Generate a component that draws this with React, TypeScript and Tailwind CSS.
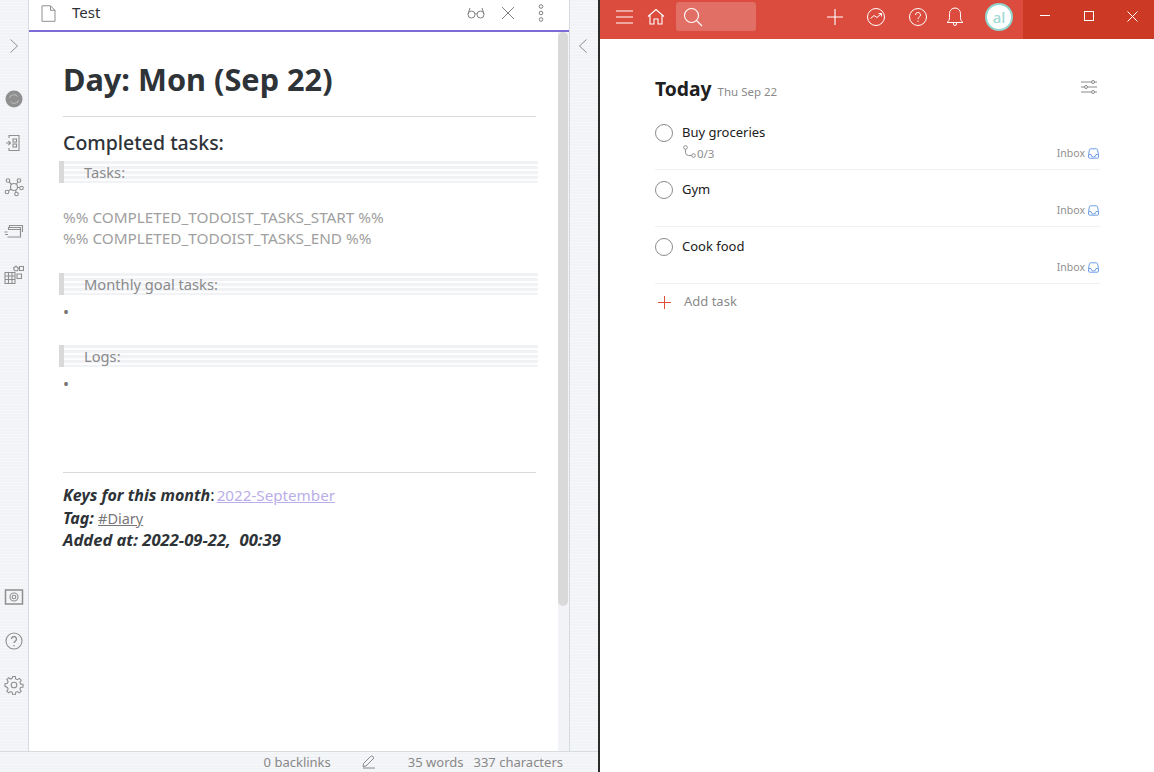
import React from "react";

const SideIcon = ({ children }: { children: React.ReactNode }) => (
  <svg width="20" height="20" viewBox="0 0 20 20" fill="none" stroke="#8f8f8f" strokeWidth="1.1">{children}</svg>
);

const Band = ({ label }: { label: string }) => (
  <div className="h-[22px] w-[479px] -ml-1 border-l-[5px] border-[#d9d9d9] pl-5 text-[14.700px] leading-[22px] text-[#8a8a8a] bg-[repeating-linear-gradient(180deg,#f0f2f6_0px,#f0f2f6_3px,#fdfdfe_3px,#fdfdfe_5px)]">
    {label}
  </div>
);

const InboxIcon = () => (
  <svg width="11" height="11" viewBox="0 0 11 11" fill="none" stroke="#6f9fe8" strokeWidth="1">
    <path d="M2.500 .800h6a1 1 0 0 1 1 .8l1 5v2.400a1.200 1.200 0 0 1-1.200 1.200H1.700A1.200 1.200 0 0 1 .5 9V6.600l1-5a1 1 0 0 1 1-.8z" />
    <path d="M.7 6.500h2.300a2.500 2.500 0 0 0 5 0h2.300" />
  </svg>
);

const Task = ({ title, sub }: { title: string; sub?: boolean }) => (
  <div className="h-[57px] border-b border-[#f0f0f0] flex flex-col pt-[8px]">
    <div className="flex items-center h-[24px]">
      <div className="w-[18px] h-[18px] rounded-full border border-[#8c8c8c] mr-[9px]" />
      <span className="text-[13px] text-[#202020]">{title}</span>
    </div>
    <div className="flex items-center justify-between h-[17px] pl-[27px] pr-[1px] text-[10.500px] text-[#8f8f8f]">
      <span className="flex items-center">
        {sub && (
          <>
            <svg width="15" height="15" viewBox="0 0 15 15" fill="none" stroke="#8f8f8f" strokeWidth="1" className="-mt-0.5">
              <circle cx="3.500" cy="2.500" r="1.800" />
              <circle cx="11.500" cy="10.500" r="1.800" />
              <path d="M3.500 4.300v3a3.200 3.200 0 0 0 3.200 3.200h3" />
            </svg>
            <span className="text-[11.500px]">0/3</span>
          </>
        )}
      </span>
      <span className="flex items-center gap-[3px]">
        Inbox <InboxIcon />
      </span>
    </div>
  </div>
);

export default function App() {
  return (
    <div className="w-[1154px] h-[772px] overflow-hidden flex bg-[#f2f3f6] bg-[repeating-linear-gradient(180deg,#f1f3f6_0px,#f1f3f6_2px,#f6f7f9_2px,#f6f7f9_3px)] font-['Noto_Sans','Open_Sans',sans-serif]">
      {/* Obsidian window */}
      <div className="w-[598px] h-full flex flex-col">
        <div className="flex flex-1 min-h-0">
          {/* left ribbon */}
          <div className="w-[29px] border-r border-[#d5dbe0] flex flex-col items-center pt-[38px] pb-[56px] shrink-0">
            <svg width="10" height="16" viewBox="0 0 10 16" fill="none" stroke="#8f8f8f" strokeWidth="1" className="mb-[35px]">
              <path d="M1.500 1.500 8.500 8l-7 6.500" />
            </svg>
            <div className="flex flex-col gap-[24px] flex-1 items-center">
              <SideIcon>
                <circle cx="10" cy="10" r="8.500" fill="#8f8f8f" stroke="none" />
                <path d="M5.500 9a4.500 4.500 0 0 1 8-1.500M14.500 11a4.500 4.500 0 0 1-8 1.500" stroke="#b5b5b5" />
              </SideIcon>
              <SideIcon>
                <path d="M5 5V2.500h10v15H5V15" />
                <path d="M2 10h4M4.500 8 6.500 10l-2 2" />
                <rect x="9" y="6" width="3.500" height="3" />
                <rect x="9" y="11" width="3.500" height="3" />
              </SideIcon>
              <SideIcon>
                <circle cx="10" cy="10" r="3.500" />
                <circle cx="4" cy="3.500" r="1.800" />
                <circle cx="15" cy="3.500" r="1.800" />
                <circle cx="3" cy="15" r="1.800" />
                <circle cx="17.500" cy="11" r="1.800" />
                <circle cx="12.500" cy="17" r="1.800" />
                <path d="m5.200 5 2.400 2.500M14 5l-2 2.500M4.500 14 7 12M13.500 10.500h2.300M11.500 13.500l.7 1.800" />
              </SideIcon>
              <SideIcon>
                <path d="M5.500 7V4.500h13V11" />
                <path d="M4.500 9V6.500h12V14" />
                <path d="M4 8.500h12.500V16H3.500M.5 11h3M1 13.500h3" />
              </SideIcon>
              <SideIcon>
                <path d="M1 7.500h10V18.500H1zM1 11h10M1 14.500h10M4.500 7.500v11M8 7.500v11" />
                <path d="m9.500 3 2.500-1.800 2.500 2-1 2.500h-3zM15.500 1.500h4v4h-4zM13 9h4.500v4.500H13z" />
              </SideIcon>
            </div>
            <div className="flex flex-col gap-[24px] items-center">
              <SideIcon>
                <rect x="1.500" y="3" width="17" height="14" strokeWidth="1.500" />
                <circle cx="10" cy="10" r="4" />
                <circle cx="10" cy="10" r="1.800" />
              </SideIcon>
              <SideIcon>
                <circle cx="10" cy="10" r="8" />
                <path d="M7.500 8a2.500 2.500 0 1 1 3.800 2.100c-.9.6-1.300 1-1.300 2" strokeWidth="1.400" />
                <path d="M10 14v1.300" strokeWidth="1.400" />
              </SideIcon>
              <SideIcon>
                <circle cx="10" cy="10" r="2.800" />
                <path d="M8.700 1.500h2.600l.4 2.400 1.700.8 2-1.300 1.800 1.800-1.300 2 .7 1.700 2.400.5v2.600l-2.400.4-.7 1.700 1.300 2-1.800 1.800-2-1.300-1.700.7-.4 2.400H8.700l-.4-2.400-1.700-.7-2 1.300-1.800-1.800 1.300-2-.7-1.700L1 11.300V8.700l2.400-.5.700-1.700-1.300-2 1.800-1.800 2 1.300 1.700-.8z" />
              </SideIcon>
            </div>
          </div>

          {/* note pane */}
          <div className="w-[540px] flex flex-col bg-white shrink-0">
            <div className="h-[32px] border-b-2 border-[#7a6bd6] flex items-center pl-[12px] pr-[25px] shrink-0">
              <svg width="15" height="17" viewBox="0 0 15 17" fill="none" stroke="#8f8f8f" strokeWidth="1" className="-mt-1">
                <path d="M1 .800h8.500L14 5.300v11H1zM9.500.800v4.500H14" />
              </svg>
              <span className="ml-[16px] text-[15px] text-[#2e3338] leading-none -mt-[6px]">Test</span>
              <div className="ml-auto flex items-center gap-[16px] -mt-[4px]">
                <svg width="18" height="12" viewBox="0 0 18 12" fill="none" stroke="#7f7f7f" strokeWidth="1">
                  <circle cx="4.500" cy="7.500" r="3.500" />
                  <circle cx="13.500" cy="7.500" r="3.500" />
                  <path d="M8 7c.6-.5 1.400-.5 2 0M1 7l2-6M17 7l-2-6" />
                </svg>
                <svg width="14" height="14" viewBox="0 0 14 14" fill="none" stroke="#7f7f7f" strokeWidth="1">
                  <path d="m1 1 12 12M13 1 1 13" />
                </svg>
                <svg width="6" height="18" viewBox="0 0 6 18" fill="none" stroke="#7f7f7f" strokeWidth="1" className="ml-[7px]">
                  <circle cx="3" cy="2.500" r="1.800" />
                  <circle cx="3" cy="9" r="1.800" />
                  <circle cx="3" cy="15.500" r="1.800" />
                </svg>
              </div>
            </div>
            <div className="flex flex-1 min-h-0">
              <div className="w-[529px] pl-[34px] pr-[22px] flex flex-col">
                <div className="text-[30.700px] leading-[44px] font-bold text-[#2e3338] mt-[25px]">Day: Mon (Sep 22)</div>
                <div className="h-px bg-[#d9d9d9] mt-[15px]" />
                <div className="text-[19.500px] leading-[28px] font-medium text-[#2e3338] mt-[12px]">Completed tasks:</div>
                <div className="mt-[4px]"><Band label="Tasks:" /></div>
                <div className="mt-[24px] text-[15.300px] leading-[21px] text-[#a0a0a0] whitespace-nowrap">
                  <div>%% COMPLETED_TODOIST_TASKS_START %%</div>
                  <div>%% COMPLETED_TODOIST_TASKS_END %%</div>
                </div>
                <div className="mt-[24px]"><Band label="Monthly goal tasks:" /></div>
                <div className="h-[22px] leading-[34px] text-[#777] text-[16px]">•</div>
                <div className="mt-[28px]"><Band label="Logs:" /></div>
                <div className="h-[22px] leading-[34px] text-[#777] text-[16px]">•</div>
                <div className="h-px bg-[#d9d9d9] mt-[83px]" />
                <div className="mt-[11px] text-[16px] leading-[22.600px] text-[#2e3338]">
                  <div><b className="italic">Keys for this month</b>: <span className="text-[#b9aee8] underline text-[15.200px] -ml-[2px]">2022-September</span></div>
                  <div><b className="italic">Tag:</b> <span className="text-[#777] underline text-[14.500px]">#Diary</span></div>
                  <div className="font-bold italic whitespace-pre text-[16.600px]">Added at: 2022-09-22,  00:39</div>
                </div>
              </div>
              <div className="w-[11px] bg-[#f2f3f6] shrink-0">
                <div className="w-[10px] h-[574px] bg-[#d9d9d9] rounded-[5px]" />
              </div>
            </div>
          </div>

          {/* right ribbon */}
          <div className="flex-1 border-l border-[#d5dbe0] flex justify-center pt-[38px]">
            <svg width="10" height="16" viewBox="0 0 10 16" fill="none" stroke="#8f8f8f" strokeWidth="1" className="-ml-[2px]">
              <path d="M8.500 1.500 1.500 8l7 6.500" />
            </svg>
          </div>
        </div>
        {/* status bar */}
        <div className="h-[21px] border-t border-[#d9dcdf] flex items-center justify-end pr-[35px] text-[13px] text-[#888] shrink-0 leading-none">
          <span>0 backlinks</span>
          <svg width="14" height="14" viewBox="0 0 14 14" fill="none" stroke="#888" strokeWidth="1" className="ml-[31px] mr-[32px]">
            <path d="M1 11.500 1.500 8.500 8.500 1.500a1.500 1.500 0 0 1 2.500 2.500L4 11zM1 13h12" />
          </svg>
          <span>35 words</span>
          <span className="ml-[10px]">337 characters</span>
        </div>
      </div>

      {/* divider */}
      <div className="w-[2px] h-full bg-[#2b2b2b] shrink-0" />

      {/* Todoist */}
      <div className="w-[554px] h-full bg-white flex flex-col shrink-0">
        <div className="h-[39px] flex bg-[#db4c3f] text-white shrink-0">
          <div className="flex-1 flex items-center pl-[16px] pb-[6px]">
            <svg width="17" height="14" viewBox="0 0 17 14" fill="none" stroke="#fff" strokeWidth="1">
              <path d="M0 1h17M0 7h17M0 13h17" />
            </svg>
            <svg width="18" height="18" viewBox="0 0 18 18" fill="none" stroke="#fff" strokeWidth="1.100" className="ml-[14px]">
              <path d="M1 8.500 9 1.500l8 7M3 7v9h4v-5h4v5h4V7" />
            </svg>
            <div className="w-[80px] h-[29px] rounded-[3px] bg-white/20 ml-[11px] flex items-center pl-[7px]">
              <svg width="20" height="20" viewBox="0 0 20 20" fill="none" stroke="#fff" strokeWidth="1.100">
                <circle cx="8.500" cy="8.500" r="7" />
                <path d="m13.500 13.500 5.500 5.500" />
              </svg>
            </div>
            <div className="ml-auto flex items-center">
              <svg width="18" height="18" viewBox="0 0 18 18" fill="none" stroke="#fff" strokeWidth="1.100" className="mr-[23px]">
                <path d="M9 1v16M1 9h16" />
              </svg>
              <svg width="18" height="18" viewBox="0 0 18 18" fill="none" stroke="#fff" strokeWidth="1" className="mr-[24px]">
                <circle cx="9" cy="9" r="8.500" />
                <path d="m3.500 10.500 3.500-3 3 2 4.500-4M11.500 5.500h3v3" />
              </svg>
              <svg width="18" height="18" viewBox="0 0 18 18" fill="none" stroke="#fff" strokeWidth="1" className="mr-[19px]">
                <circle cx="9" cy="9" r="8.500" />
                <path d="M6.500 7a2.500 2.500 0 1 1 3.600 2.200C9.300 9.700 9 10.200 9 11M9 12.500v1.300" />
              </svg>
              <svg width="18" height="20" viewBox="0 0 18 20" fill="none" stroke="#fff" strokeWidth="1" className="mr-[21px]">
                <path d="M1 15.500c1.500-1 2.500-2.500 2.500-5V6.500a5.500 5.500 0 0 1 11 0v4c0 2.500 1 4 2.500 5zM7.500 16v1a1.500 1.500 0 0 0 3 0v-1" />
              </svg>
              <div className="w-[28px] h-[28px] rounded-full bg-white border-2 border-[#8fd4cd] flex items-center justify-center text-[15px] font-medium text-[#9ed9d3] leading-none mr-[10px] mt-px">
                al
              </div>
            </div>
          </div>
          <div className="w-[131px] bg-[#cc3a25] flex items-center shrink-0 pb-[7px]">
            <div className="w-[44px] flex justify-center">
              <div className="w-[10px] h-px bg-white -mt-[1px]" />
            </div>
            <div className="w-[44px] flex justify-center">
              <div className="w-[10px] h-[10px] border border-white" />
            </div>
            <div className="w-[44px] flex justify-center">
              <svg width="11" height="11" viewBox="0 0 11 11" fill="none" stroke="#fff" strokeWidth="1">
                <path d="m.5.5 10 10M10.500.5l-10 10" />
              </svg>
            </div>
          </div>
        </div>

        <div className="pl-[55px] pr-[54px] flex-1">
          <div className="flex items-center justify-between mt-[36px] h-[28px]">
            <div className="flex items-baseline">
              <span className="text-[19.300px] font-bold text-[#202020]">Today</span>
              <span className="ml-[6px] text-[11.500px] text-[#8a8a8a]">Thu Sep 22</span>
            </div>
            <svg width="18" height="16" viewBox="0 0 18 16" fill="none" stroke="#8a8a8a" strokeWidth="1" className="mr-[2px] -mt-1">
              <path d="M1 3h10.500M14.500 3H17M1 8h3.500M7.500 8H17M1 13h10.500M14.500 13H17" />
              <circle cx="13" cy="3" r="1.500" />
              <circle cx="6" cy="8" r="1.500" />
              <circle cx="13" cy="13" r="1.500" />
            </svg>
          </div>
          <div className="mt-[10px]">
            <Task title="Buy groceries" sub />
            <Task title="Gym" />
            <Task title="Cook food" />
          </div>
          <div className="flex items-center h-[36px] pl-[3px]">
            <svg width="13" height="13" viewBox="0 0 13 13" fill="none" stroke="#dd4b39" strokeWidth="1">
              <path d="M6.500 0v13M0 6.500h13" />
            </svg>
            <span className="ml-[13px] text-[13px] text-[#8a8a8a]">Add task</span>
          </div>
        </div>
      </div>
    </div>
  );
}
